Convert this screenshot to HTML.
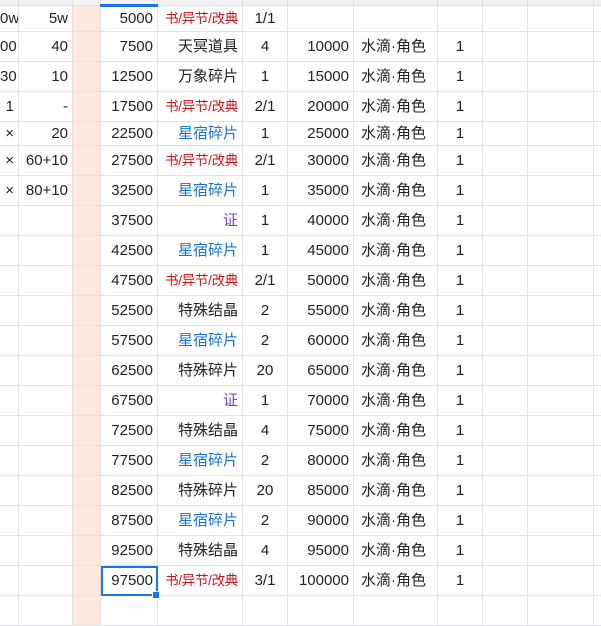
<!DOCTYPE html>
<html><head><meta charset="utf-8"><style>
body{margin:0;width:601px;height:601px;overflow:hidden;background:#fff;font-family:"Liberation Sans","Noto Sans CJK SC",sans-serif;color:#222;position:relative}
table{border-collapse:collapse;table-layout:fixed;position:absolute;left:-1px;top:-1px;width:610px}
td{border:1px solid #e2e2e6;padding:0 4px 0 0;font-size:15px;text-align:right;white-space:nowrap;overflow:hidden;height:29px;line-height:16px}
tr.h td{height:4px;background:#f3f3f5;padding:0;line-height:0;font-size:0}
tr.s td{height:23px}
tr.f td{height:24px}
td.o{background:#fce8dc}
td.c{text-align:center;padding:0}
td.l{text-align:left;padding-left:7px}
.r{color:#c8161d;font-size:13.5px;letter-spacing:-0.3px;line-height:14px}
.b{color:#1a73c8}
.p{color:#7b3fb5}
.sel{outline:2px solid #1a73e8;outline-offset:-2px}
</style></head><body>
<table>
<colgroup><col style="width:19px"><col style="width:54px"><col style="width:28px"><col style="width:57px"><col style="width:85px"><col style="width:45px"><col style="width:66px"><col style="width:84px"><col style="width:45px"><col style="width:45px"><col style="width:66px"><col style="width:16px"></colgroup>
<tr class="h"><td></td><td></td><td></td><td style="border-bottom:3px solid #1a73e8"></td><td></td><td></td><td></td><td></td><td></td><td></td><td></td><td></td></tr>
<tr class="f"><td>0w</td><td>5w</td><td class="o"></td><td>5000</td><td><span class="r">书/异节/改典</span></td><td class="c">1/1</td><td></td><td></td><td></td><td></td><td></td><td></td></tr>
<tr><td>00</td><td>40</td><td class="o"></td><td>7500</td><td>天冥道具</td><td class="c">4</td><td>10000</td><td class="l">水滴·角色</td><td class="c">1</td><td></td><td></td><td></td></tr>
<tr><td>30</td><td>10</td><td class="o"></td><td>12500</td><td>万象碎片</td><td class="c">1</td><td>15000</td><td class="l">水滴·角色</td><td class="c">1</td><td></td><td></td><td></td></tr>
<tr><td>1</td><td>-</td><td class="o"></td><td>17500</td><td><span class="r">书/异节/改典</span></td><td class="c">2/1</td><td>20000</td><td class="l">水滴·角色</td><td class="c">1</td><td></td><td></td><td></td></tr>
<tr class="s"><td>×</td><td>20</td><td class="o"></td><td>22500</td><td class="b">星宿碎片</td><td class="c">1</td><td>25000</td><td class="l">水滴·角色</td><td class="c">1</td><td></td><td></td><td></td></tr>
<tr><td>×</td><td>60+10</td><td class="o"></td><td>27500</td><td><span class="r">书/异节/改典</span></td><td class="c">2/1</td><td>30000</td><td class="l">水滴·角色</td><td class="c">1</td><td></td><td></td><td></td></tr>
<tr><td>×</td><td>80+10</td><td class="o"></td><td>32500</td><td class="b">星宿碎片</td><td class="c">1</td><td>35000</td><td class="l">水滴·角色</td><td class="c">1</td><td></td><td></td><td></td></tr>
<tr><td></td><td></td><td class="o"></td><td>37500</td><td class="p">证</td><td class="c">1</td><td>40000</td><td class="l">水滴·角色</td><td class="c">1</td><td></td><td></td><td></td></tr>
<tr><td></td><td></td><td class="o"></td><td>42500</td><td class="b">星宿碎片</td><td class="c">1</td><td>45000</td><td class="l">水滴·角色</td><td class="c">1</td><td></td><td></td><td></td></tr>
<tr><td></td><td></td><td class="o"></td><td>47500</td><td><span class="r">书/异节/改典</span></td><td class="c">2/1</td><td>50000</td><td class="l">水滴·角色</td><td class="c">1</td><td></td><td></td><td></td></tr>
<tr><td></td><td></td><td class="o"></td><td>52500</td><td>特殊结晶</td><td class="c">2</td><td>55000</td><td class="l">水滴·角色</td><td class="c">1</td><td></td><td></td><td></td></tr>
<tr><td></td><td></td><td class="o"></td><td>57500</td><td class="b">星宿碎片</td><td class="c">2</td><td>60000</td><td class="l">水滴·角色</td><td class="c">1</td><td></td><td></td><td></td></tr>
<tr><td></td><td></td><td class="o"></td><td>62500</td><td>特殊碎片</td><td class="c">20</td><td>65000</td><td class="l">水滴·角色</td><td class="c">1</td><td></td><td></td><td></td></tr>
<tr><td></td><td></td><td class="o"></td><td>67500</td><td class="p">证</td><td class="c">1</td><td>70000</td><td class="l">水滴·角色</td><td class="c">1</td><td></td><td></td><td></td></tr>
<tr><td></td><td></td><td class="o"></td><td>72500</td><td>特殊结晶</td><td class="c">4</td><td>75000</td><td class="l">水滴·角色</td><td class="c">1</td><td></td><td></td><td></td></tr>
<tr><td></td><td></td><td class="o"></td><td>77500</td><td class="b">星宿碎片</td><td class="c">2</td><td>80000</td><td class="l">水滴·角色</td><td class="c">1</td><td></td><td></td><td></td></tr>
<tr><td></td><td></td><td class="o"></td><td>82500</td><td>特殊碎片</td><td class="c">20</td><td>85000</td><td class="l">水滴·角色</td><td class="c">1</td><td></td><td></td><td></td></tr>
<tr><td></td><td></td><td class="o"></td><td>87500</td><td class="b">星宿碎片</td><td class="c">2</td><td>90000</td><td class="l">水滴·角色</td><td class="c">1</td><td></td><td></td><td></td></tr>
<tr><td></td><td></td><td class="o"></td><td>92500</td><td>特殊结晶</td><td class="c">4</td><td>95000</td><td class="l">水滴·角色</td><td class="c">1</td><td></td><td></td><td></td></tr>
<tr><td></td><td></td><td class="o"></td><td class="sel">97500</td><td><span class="r">书/异节/改典</span></td><td class="c">3/1</td><td>100000</td><td class="l">水滴·角色</td><td class="c">1</td><td></td><td></td><td></td></tr>
<tr><td></td><td></td><td class="o"></td><td></td><td></td><td></td><td></td><td></td><td></td><td></td><td></td><td></td></tr>
</table>
<div style="position:absolute;left:152px;top:591px;width:6px;height:6px;background:#1a73e8;border:1px solid #fff"></div>
</body></html>
